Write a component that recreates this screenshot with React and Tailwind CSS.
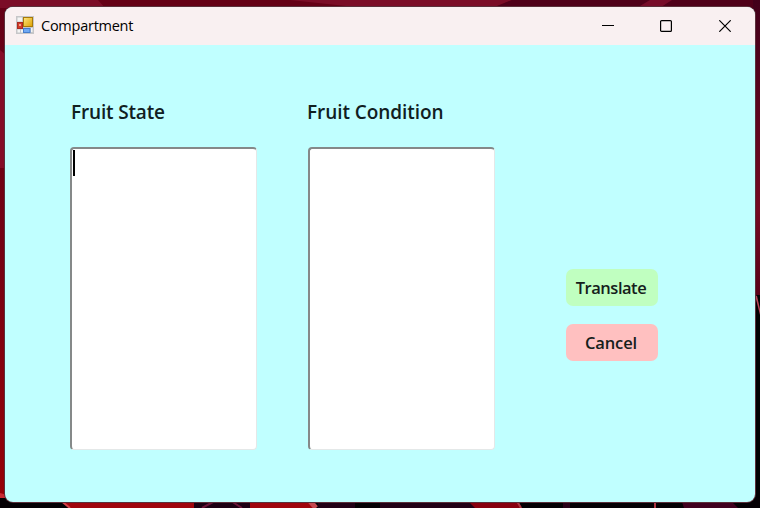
function Wallpaper() {
  return (
    <svg className="absolute inset-0 h-full w-full" viewBox="0 0 760 508" aria-hidden="true">
      <defs>
        <linearGradient id="left" x1="0" y1="0" x2="0" y2="1">
          <stop offset="0" stopColor="#650016" />
          <stop offset="0.5" stopColor="#760013" />
          <stop offset="1" stopColor="#960008" />
        </linearGradient>
        <linearGradient id="right" x1="0" y1="0" x2="0" y2="1">
          <stop offset="0" stopColor="#42001a" />
          <stop offset="0.7" stopColor="#760a22" />
          <stop offset="1" stopColor="#580018" />
        </linearGradient>
      </defs>
      <rect width="760" height="508" fill="#650016" />
      <path d="M0 0H98L106 9H0Z" fill="#7b0d27" />
      <path d="M290 0H512L490 9H374Z" fill="#7b0d27" />
      <path d="M512 0H760V9H490Z" fill="#500019" />
      <path d="M650 0H672L658 9H635Z" fill="#770c29" />
      <rect y="8" width="7" height="490" fill="url(#left)" />
      <path d="M0 50L7 56V168H0Z" fill="#850d28" />
      <path d="M0 493L7 495V500H0Z" fill="#c92a33" />
      <rect x="753" width="7" height="300" fill="url(#right)" />
      <path d="M753 295H760V508H753Z" fill="#020002" />
      <path d="M755 295L757 296L760 309V315Z" fill="#b84458" />
      <rect y="498" width="760" height="10" fill="#050004" />
      <path d="M60 500H194V508H70Z" fill="#a0050d" />
      <path d="M60 500L70 508" stroke="#d44249" strokeWidth="2" />
      <path d="M194 500H250V508H194Z" fill="#1d0013" />
      <path d="M202 508L215 501M231 501L242 508" stroke="#6b1438" strokeWidth="2" />
      <path d="M250 500H309L316 508H250Z" fill="#a0050d" />
      <path d="M309 500L316 508" stroke="#c44850" strokeWidth="5" />
      <path d="M318 500H355V508H318ZM380 500H470L478 508H380Z" fill="#210016" />
      <path d="M467 500H517L522 508H475Z" fill="#88000f" />
      <path d="M517 501L521 508M655 501V508" stroke="#ad3541" strokeWidth="2" />
      <path d="M563 502H570V508H563Z" fill="#280018" />
      <path d="M682 502H732L738 508H684Z" fill="#40001f" />
    </svg>
  );
}

function FormIcon() {
  return (
    <svg className="ml-[11px] size-[18px] -translate-y-px" viewBox="0 0 18 18" aria-hidden="true">
      <defs>
        <linearGradient id="gold" x1="0" y1="0" x2="1" y2="1">
          <stop stopColor="#ffe780" />
          <stop offset="1" stopColor="#dda000" />
        </linearGradient>
      </defs>
      <rect width="18" height="18" fill="#c6c6c8" />
      <path d="M1.5 1.5H6V5.5H1.5ZM1.5 13.5H4V16.5H1.5ZM5 13.5H7V16.5H5ZM15 12H16.5V16H15Z" fill="#f4f4f4" />
      <rect x="1.5" y="6.5" width="5" height="6" fill="#d23b27" stroke="#a92a22" />
      <rect x="3" y="8" width="2" height="2" fill="#f3a08e" />
      <rect x="7.5" y="1.5" width="9" height="9" fill="url(#gold)" stroke="#a87908" />
      <rect x="7.5" y="12.5" width="6.5" height="4" fill="#6fa9f4" stroke="#467dcc" />
    </svg>
  );
}

function TitleBar() {
  return (
    <header className="flex h-[38px] items-center bg-[#f9f0f1]">
      <FormIcon />
      <h1 className="ml-[7px] flex-1 text-[14.5px] leading-5 tracking-[-0.25px] text-black">Compartment</h1>
      <div className="flex text-black">
        <button className="grid h-[38px] w-[58px] place-items-center" aria-label="Minimize">
          <svg className="size-3" viewBox="0 0 12 12"><path d="M0 5.5H12" stroke="currentColor" /></svg>
        </button>
        <button className="grid h-[38px] w-[58px] place-items-center" aria-label="Maximize">
          <svg className="size-3" viewBox="0 0 12 12"><rect x=".6" y=".6" width="10.8" height="10.8" rx="1" fill="none" stroke="currentColor" strokeWidth="1.2" /></svg>
        </button>
        <button className="grid h-[38px] w-[60px] place-items-center" aria-label="Close">
          <svg className="size-3" viewBox="0 0 12 12"><path d="M.3.3L11.7 11.7M11.7.3L.3 11.7" stroke="currentColor" strokeWidth="1.2" /></svg>
        </button>
      </div>
    </header>
  );
}

function Field({ label, focused, labelClass }) {
  return (
    <section className="w-[187px]">
      <h2 className={`mb-[21px] h-7 whitespace-nowrap text-[19px] font-semibold leading-7 text-[#10201f] ${labelClass}`}>{label}</h2>
      <div className="h-[303px] rounded-[4px] border-t-2 border-r border-b border-l-2 border-t-[#858989] border-r-[#e4e8e8] border-b-[#e4e8e8] border-l-[#858989] bg-white">
        {focused && <div className="ml-px mt-px h-[26px] w-[1.5px] bg-black" />}
      </div>
    </section>
  );
}

export default function App() {
  return (
    <div className="relative h-[508px] w-[760px] overflow-hidden pl-[5px] pt-[7px] font-['Open_Sans','Noto_Sans',sans-serif]">
      <Wallpaper />
      <main className="relative h-[495px] w-[750px] overflow-hidden rounded-[8px] bg-[#c0ffff] shadow-[0_0_0_1px_#5b303b]">
        <TitleBar />
        <div className="flex pl-[65px] pt-[53px]">
          <Field label="Fruit State" labelClass="ml-px tracking-[-0.16px]" focused />
          <div className="ml-[51px]">
            <Field label="Fruit Condition" labelClass="-ml-px tracking-[-0.06px]" />
          </div>
          <div className="ml-[71px] mt-[171px] flex w-[92px] flex-col gap-[18px] text-[16.5px] font-semibold text-[#15201b]">
            <button className="h-[37px] rounded-[7px] bg-[#c0ffc0] pr-[2px] pt-[2px] tracking-[-0.48px]">Translate</button>
            <button className="h-[37px] rounded-[7px] bg-[#ffc0c0] pr-[2px] pt-[2px] tracking-[-0.15px]">Cancel</button>
          </div>
        </div>
      </main>
    </div>
  );
}
